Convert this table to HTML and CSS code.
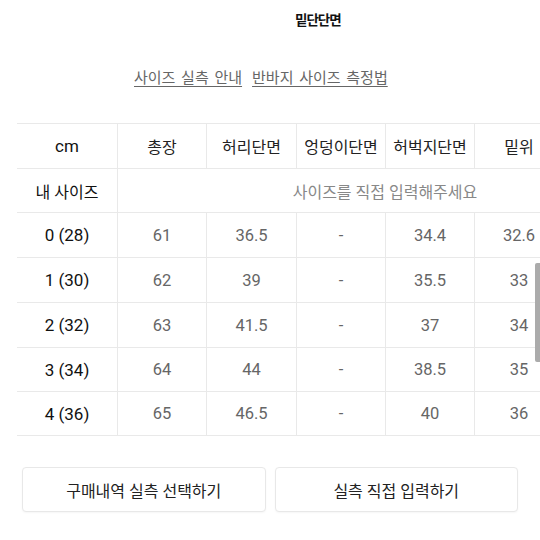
FILE: index.html
```html
<!DOCTYPE html>
<html lang="ko">
<head>
<meta charset="utf-8">
<link rel="stylesheet" href="styles.css">
</head>
<body>
<div class="page">
  <div class="title">밑단단면</div>
  <div class="links">
    <a class="link" href="#">사이즈 실측 안내</a>
    <a class="link" href="#">반바지 사이즈 측정법</a>
  </div>
  <div class="table-wrap">
    <table class="size-table">
      <colgroup>
        <col class="c-first"><col class="c"><col class="c-w"><col class="c"><col class="c"><col class="c"><col class="c">
      </colgroup>
      <thead>
        <tr class="r45"><th class="label">cm</th><th>총장</th><th>허리단면</th><th>엉덩이단면</th><th>허벅지단면</th><th>밑위</th><th>밑단단면</th></tr>
      </thead>
      <tbody>
        <tr class="r44"><td class="label ko">내 사이즈</td><td class="placeholder" colspan="6">사이즈를 직접 입력해주세요</td></tr>
        <tr class="r45"><td class="label">0 (28)</td><td>61</td><td>36.5</td><td>-</td><td>34.4</td><td>32.6</td><td>19</td></tr>
        <tr class="r45"><td class="label">1 (30)</td><td>62</td><td>39</td><td>-</td><td>35.5</td><td>33</td><td>20</td></tr>
        <tr class="r45"><td class="label">2 (32)</td><td>63</td><td>41.5</td><td>-</td><td>37</td><td>34</td><td>21</td></tr>
        <tr class="r44"><td class="label">3 (34)</td><td>64</td><td>44</td><td>-</td><td>38.5</td><td>35</td><td>22</td></tr>
        <tr class="r44 last"><td class="label">4 (36)</td><td>65</td><td>46.5</td><td>-</td><td>40</td><td>36</td><td>23</td></tr>
      </tbody>
    </table>
  </div>
  <div class="buttons">
    <button class="btn">구매내역 실측 선택하기</button>
    <button class="btn">실측 직접 입력하기</button>
  </div>
  <div class="scroll-thumb"></div>
</div>
</body>
</html>
```
FILE: styles.css
```css
* { box-sizing: border-box; }
html, body {
  margin: 0;
  padding: 0;
  background: #fff;
}
body {
  width: 540px;
  height: 540px;
  overflow: hidden;
  font-family: "Roboto", "Noto Sans CJK KR", sans-serif;
  color: #222;
}
.page {
  position: relative;
  width: 540px;
  height: 540px;
}
.title {
  height: 40px;
  line-height: 40px;
  padding-left: 295px;
  font-size: 13.5px;
  font-weight: 700;
  letter-spacing: -1px;
  color: #111;
}
.links {
  margin-top: 20px;
  height: 36px;
  line-height: 36px;
  display: flex;
  justify-content: flex-start;
  gap: 10px;
  padding-left: 134px;
}
.link {
  font-size: 15px;
  word-spacing: 2px;
  color: #666;
  text-decoration: underline;
  text-decoration-color: #666;
  text-underline-offset: 3px;
  text-decoration-thickness: 1px;
}
.table-wrap {
  margin-top: 27px;
  margin-left: 17px;
  width: 523px;
  overflow: hidden;
}
.size-table {
  table-layout: fixed;
  width: 634px;
  border-collapse: separate;
  border-spacing: 0;
}
.c-first { width: 100px; }
.c { width: 89px; }
.c-w { width: 90px; }
.size-table th,
.size-table td {
  border-top: 1px solid #e9e9e9;
  border-left: 1px solid #e9e9e9;
  padding: 0;
  text-align: center;
  vertical-align: middle;
  font-size: 16px;
  white-space: nowrap;
}
.size-table th:first-child,
.size-table td:first-child {
  border-left: none;
}
.size-table tr.last td {
  border-bottom: 1px solid #e9e9e9;
}
.r45 th, .r45 td { height: 45px; }
.r44 th, .r44 td { height: 44px; }
.r44.last td { height: 45px; }
.size-table th {
  font-weight: 400;
  color: #222;
}
.size-table td {
  color: #666;
  font-size: 16.5px;
}
.size-table .label {
  color: #111;
  font-size: 17px;
}
.size-table td.label.ko {
  font-size: 16px;
}
.size-table td.placeholder {
  color: #888;
  font-size: 16px;
}
.buttons {
  margin-top: 31px;
  display: flex;
  gap: 9px;
  padding: 0 22px;
}
.btn {
  flex: 1;
  height: 45px;
  background: #fff;
  border: 1px solid #e8e8e8;
  border-radius: 4px;
  box-shadow: 0 1px 2px rgba(0, 0, 0, 0.04);
  font-family: "Roboto", "Noto Sans CJK KR", sans-serif;
  font-size: 16px;
  color: #222;
  padding: 0;
}
.scroll-thumb {
  position: absolute;
  right: 0;
  top: 263px;
  width: 5px;
  height: 99px;
  background: #ababab;
  border-radius: 2px 0 0 2px;
}
```
